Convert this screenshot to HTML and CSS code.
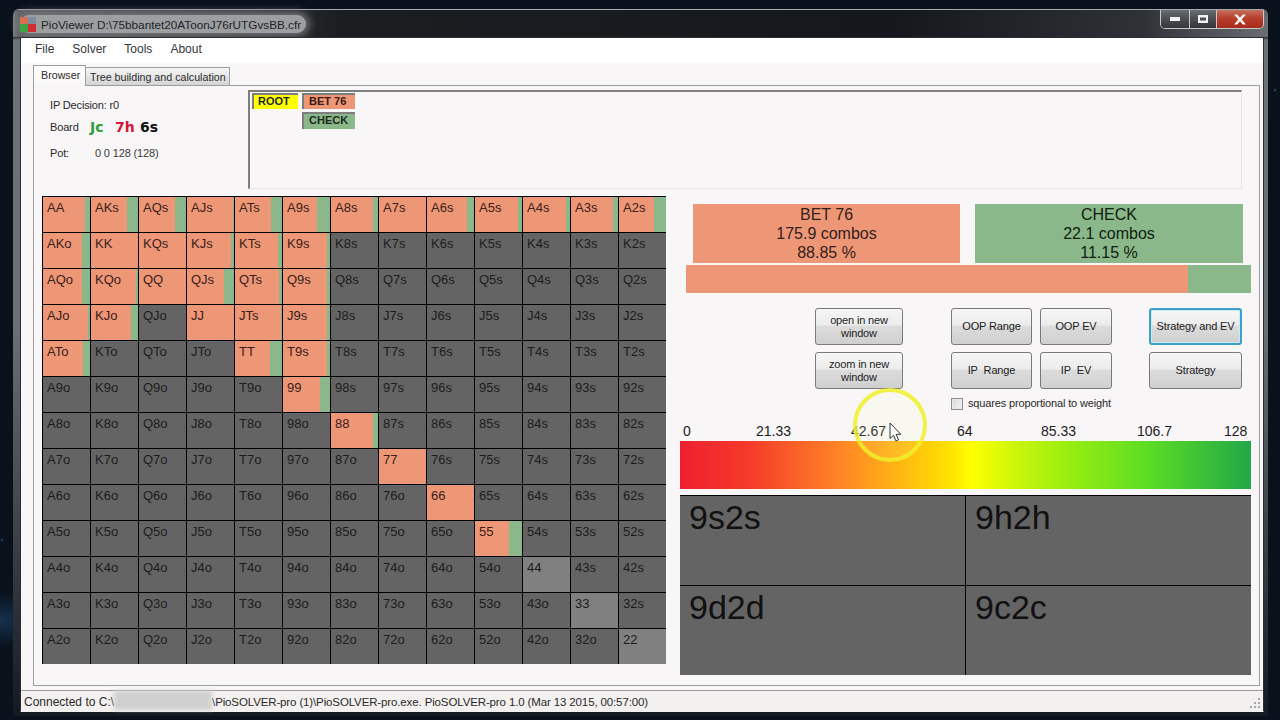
FILE: index.html
```html
<!DOCTYPE html>
<html lang="en">
<head>
<meta charset="utf-8">
<title>PioViewer</title>
<link rel="stylesheet" href="styles.css">
</head>
<body>
<div class="window">
  <div class="titlebar">
    <div class="title-glow">
      <div class="app-icon"><b class="q1"></b><b class="q2"></b><b class="q3"></b><b class="q4"></b></div>
      <span class="title-text">PioViewer D:\75bbantet20AToonJ76rUTGvsBB.cfr</span>
    </div>
    <div class="controls">
      <div class="ctl ctl-min"><svg width="12" height="6" viewBox="0 0 12 6"><rect x="1" y="1" width="10" height="4" fill="#eef2f4"/></svg></div>
      <div class="ctl ctl-max"><svg width="12" height="10" viewBox="0 0 12 10"><path d="M1 1h10v8H1z M3 3.5v3h6v-3z" fill="#eef2f4" fill-rule="evenodd"/></svg></div>
      <div class="ctl ctl-close"><svg width="14" height="11" viewBox="0 0 14 11"><path d="M1 0.5h3.2L7 3.4 9.8 0.5H13L8.8 5.5 13 10.5H9.8L7 7.6 4.2 10.5H1L5.2 5.5z" fill="#f4f0ee"/></svg></div>
    </div>
  </div>
  <div class="client">
    <nav class="menu"><span>File</span><span>Solver</span><span>Tools</span><span>About</span></nav>
    <div class="tabs">
      <div class="tab tab-active">Browser</div>
      <div class="tab tab-idle">Tree building and calculation</div>
    </div>
    <div class="page">
      <div class="top-row">
        <div class="info">
          <div class="info-decision">IP Decision: r0</div>
          <div class="info-board"><span class="info-label">Board</span><b class="card green">Jc</b><b class="card red">7h</b><b class="card black">6s</b></div>
          <div class="info-pot"><span class="info-label">Pot:</span><span>0 0 128 (128)</span></div>
        </div>
        <div class="tree">
          <div class="node node-root">ROOT</div>
          <div class="tree-col">
            <div class="node node-bet">BET 76</div>
            <div class="node node-check">CHECK</div>
          </div>
        </div>
      </div>
      <div class="main-row">
        <div class="grid">
          <div class="c p"><span>AA</span><i style="width:5px"></i></div><div class="c p"><span>AKs</span><i style="width:11px"></i></div><div class="c p"><span>AQs</span><i style="width:11px"></i></div><div class="c p"><span>AJs</span><i style="width:1px"></i></div><div class="c p"><span>ATs</span><i style="width:11px"></i></div><div class="c p"><span>A9s</span><i style="width:13px"></i></div><div class="c p"><span>A8s</span><i style="width:5px"></i></div><div class="c p"><span>A7s</span></div><div class="c p"><span>A6s</span><i style="width:7px"></i></div><div class="c p"><span>A5s</span><i style="width:4px"></i></div><div class="c p"><span>A4s</span><i style="width:4px"></i></div><div class="c p"><span>A3s</span><i style="width:5px"></i></div><div class="c p"><span>A2s</span><i style="width:12px"></i></div>
          <div class="c p"><span>AKo</span><i style="width:8px"></i></div><div class="c p"><span>KK</span></div><div class="c p"><span>KQs</span></div><div class="c p"><span>KJs</span><i style="width:3px"></i></div><div class="c p"><span>KTs</span><i style="width:4px"></i></div><div class="c p"><span>K9s</span><i style="width:3px"></i></div><div class="c"><span>K8s</span></div><div class="c"><span>K7s</span></div><div class="c"><span>K6s</span></div><div class="c"><span>K5s</span></div><div class="c"><span>K4s</span></div><div class="c"><span>K3s</span></div><div class="c"><span>K2s</span></div>
          <div class="c p"><span>AQo</span><i style="width:8px"></i></div><div class="c p"><span>KQo</span><i style="width:2px"></i></div><div class="c p"><span>QQ</span></div><div class="c p"><span>QJs</span><i style="width:10px"></i></div><div class="c p"><span>QTs</span><i style="width:3px"></i></div><div class="c p"><span>Q9s</span><i style="width:3px"></i></div><div class="c"><span>Q8s</span></div><div class="c"><span>Q7s</span></div><div class="c"><span>Q6s</span></div><div class="c"><span>Q5s</span></div><div class="c"><span>Q4s</span></div><div class="c"><span>Q3s</span></div><div class="c"><span>Q2s</span></div>
          <div class="c p"><span>AJo</span><i style="width:2px"></i></div><div class="c p"><span>KJo</span><i style="width:7px"></i></div><div class="c"><span>QJo</span></div><div class="c p"><span>JJ</span></div><div class="c p"><span>JTs</span><i style="width:1px"></i></div><div class="c p"><span>J9s</span><i style="width:3px"></i></div><div class="c"><span>J8s</span></div><div class="c"><span>J7s</span></div><div class="c"><span>J6s</span></div><div class="c"><span>J5s</span></div><div class="c"><span>J4s</span></div><div class="c"><span>J3s</span></div><div class="c"><span>J2s</span></div>
          <div class="c p"><span>ATo</span><i style="width:7px"></i></div><div class="c"><span>KTo</span></div><div class="c"><span>QTo</span></div><div class="c"><span>JTo</span></div><div class="c p"><span>TT</span><i style="width:12px"></i></div><div class="c p"><span>T9s</span><i style="width:3px"></i></div><div class="c"><span>T8s</span></div><div class="c"><span>T7s</span></div><div class="c"><span>T6s</span></div><div class="c"><span>T5s</span></div><div class="c"><span>T4s</span></div><div class="c"><span>T3s</span></div><div class="c"><span>T2s</span></div>
          <div class="c"><span>A9o</span></div><div class="c"><span>K9o</span></div><div class="c"><span>Q9o</span></div><div class="c"><span>J9o</span></div><div class="c"><span>T9o</span></div><div class="c p"><span>99</span><i style="width:10px"></i></div><div class="c"><span>98s</span></div><div class="c"><span>97s</span></div><div class="c"><span>96s</span></div><div class="c"><span>95s</span></div><div class="c"><span>94s</span></div><div class="c"><span>93s</span></div><div class="c"><span>92s</span></div>
          <div class="c"><span>A8o</span></div><div class="c"><span>K8o</span></div><div class="c"><span>Q8o</span></div><div class="c"><span>J8o</span></div><div class="c"><span>T8o</span></div><div class="c"><span>98o</span></div><div class="c p"><span>88</span><i style="width:5px"></i></div><div class="c"><span>87s</span></div><div class="c"><span>86s</span></div><div class="c"><span>85s</span></div><div class="c"><span>84s</span></div><div class="c"><span>83s</span></div><div class="c"><span>82s</span></div>
          <div class="c"><span>A7o</span></div><div class="c"><span>K7o</span></div><div class="c"><span>Q7o</span></div><div class="c"><span>J7o</span></div><div class="c"><span>T7o</span></div><div class="c"><span>97o</span></div><div class="c"><span>87o</span></div><div class="c p"><span>77</span></div><div class="c"><span>76s</span></div><div class="c"><span>75s</span></div><div class="c"><span>74s</span></div><div class="c"><span>73s</span></div><div class="c"><span>72s</span></div>
          <div class="c"><span>A6o</span></div><div class="c"><span>K6o</span></div><div class="c"><span>Q6o</span></div><div class="c"><span>J6o</span></div><div class="c"><span>T6o</span></div><div class="c"><span>96o</span></div><div class="c"><span>86o</span></div><div class="c"><span>76o</span></div><div class="c p"><span>66</span></div><div class="c"><span>65s</span></div><div class="c"><span>64s</span></div><div class="c"><span>63s</span></div><div class="c"><span>62s</span></div>
          <div class="c"><span>A5o</span></div><div class="c"><span>K5o</span></div><div class="c"><span>Q5o</span></div><div class="c"><span>J5o</span></div><div class="c"><span>T5o</span></div><div class="c"><span>95o</span></div><div class="c"><span>85o</span></div><div class="c"><span>75o</span></div><div class="c"><span>65o</span></div><div class="c p"><span>55</span><i style="width:13px"></i></div><div class="c"><span>54s</span></div><div class="c"><span>53s</span></div><div class="c"><span>52s</span></div>
          <div class="c"><span>A4o</span></div><div class="c"><span>K4o</span></div><div class="c"><span>Q4o</span></div><div class="c"><span>J4o</span></div><div class="c"><span>T4o</span></div><div class="c"><span>94o</span></div><div class="c"><span>84o</span></div><div class="c"><span>74o</span></div><div class="c"><span>64o</span></div><div class="c"><span>54o</span></div><div class="c l"><span>44</span></div><div class="c"><span>43s</span></div><div class="c"><span>42s</span></div>
          <div class="c"><span>A3o</span></div><div class="c"><span>K3o</span></div><div class="c"><span>Q3o</span></div><div class="c"><span>J3o</span></div><div class="c"><span>T3o</span></div><div class="c"><span>93o</span></div><div class="c"><span>83o</span></div><div class="c"><span>73o</span></div><div class="c"><span>63o</span></div><div class="c"><span>53o</span></div><div class="c"><span>43o</span></div><div class="c l"><span>33</span></div><div class="c"><span>32s</span></div>
          <div class="c"><span>A2o</span></div><div class="c"><span>K2o</span></div><div class="c"><span>Q2o</span></div><div class="c"><span>J2o</span></div><div class="c"><span>T2o</span></div><div class="c"><span>92o</span></div><div class="c"><span>82o</span></div><div class="c"><span>72o</span></div><div class="c"><span>62o</span></div><div class="c"><span>52o</span></div><div class="c"><span>42o</span></div><div class="c"><span>32o</span></div><div class="c l"><span>22</span></div>
        </div>
        <div class="side">
          <div class="actions">
            <div class="action action-bet">BET 76<br>175.9 combos<br>88.85 %</div>
            <div class="action action-check">CHECK<br>22.1 combos<br>11.15 %</div>
          </div>
          <div class="split"><div class="split-bet"></div><div class="split-check"></div></div>
          <div class="buttons">
            <button class="btn b1">open in new window</button>
            <button class="btn b2">OOP Range</button>
            <button class="btn b3">OOP EV</button>
            <button class="btn b4 btn-focus">Strategy and EV</button>
            <button class="btn b1">zoom in new window</button>
            <button class="btn b2">IP&nbsp; Range</button>
            <button class="btn b3">IP&nbsp; EV</button>
            <button class="btn b4">Strategy</button>
          </div>
          <label class="check"><span class="box"></span><span>squares proportional to weight</span></label>
          <div class="scale-labels"><span>0</span><span>21.33</span><span>42.67</span><span>64</span><span>85.33</span><span>106.7</span><span>128</span></div>
          <div class="scale"></div>
          <div class="hands">
            <div class="hand">9s2s</div>
            <div class="hand">9h2h</div>
            <div class="hand">9d2d</div>
            <div class="hand">9c2c</div>
          </div>
        </div>
      </div>
    </div>
    <div class="status">
      <span>Connected to C:\</span><span class="redacted"></span><span class="status-path">\PioSOLVER-pro (1)\PioSOLVER-pro.exe. PioSOLVER-pro 1.0 (Mar 13 2015, 00:57:00)</span>
      <svg class="grip" width="12" height="12" viewBox="0 0 12 12"><g fill="#a8a8a8"><rect x="9" y="1" width="2" height="2"/><rect x="5" y="5" width="2" height="2"/><rect x="9" y="5" width="2" height="2"/><rect x="1" y="9" width="2" height="2"/><rect x="5" y="9" width="2" height="2"/><rect x="9" y="9" width="2" height="2"/></g></svg>
    </div>
  </div>
</div>
<svg class="pointer" width="84" height="84" viewBox="0 0 84 84">
  <circle cx="41" cy="41" r="35" fill="rgba(255,255,190,0.10)" stroke="#f0f02a" stroke-opacity="0.85" stroke-width="4"/>
  <path d="M41 39v15.5l3.5-3.2 2.4 5.6 2.6-1.1-2.4-5.5h4.7z" fill="#fff" stroke="#30363c" stroke-width="1"/>
</svg>
</body>
</html>
```
FILE: styles.css
```css
* { box-sizing: border-box; }
html, body { margin: 0; height: 720px; overflow: hidden; }
body {
  font-family: "Liberation Sans", Arial, sans-serif;
  color: #222;
  background:
    radial-gradient(circle at 2px 540px, #2c4a70 0, transparent 2px),
    radial-gradient(circle at 1275px 90px, #30506e 0, transparent 2px),
    radial-gradient(ellipse at 0 620px, #17304c 0, transparent 60px),
    #08111c;
}
.window {
  position: absolute;
  left: 13px;
  top: 9px;
  width: 1255px;
  height: 707px;
  padding-bottom: 4px;
  border-radius: 6px 6px 0 0;
  border-top: 1px solid #a8acb0;
  background: linear-gradient(180deg, #181b1f 0, #14181c 26px, #6d7276 30px, #6a7074 45%, #262c33 88%, #141a22 100%);
  display: flex;
  flex-direction: column;
}
.titlebar {
  height: 27px;
  flex: none;
  display: flex;
  align-items: flex-start;
  border-radius: 6px 6px 0 0;
  background: linear-gradient(90deg, #7d8083 0, #5b5e60 6px, #1b1e21 330px, #14181c 70%, #2e3236 90%, #6a6e72 100%);
}
.title-glow {
  margin: 5px 0 0 7px;
  height: 18px;
  padding-right: 5px;
  display: flex;
  align-items: center;
  gap: 5px;
  border-radius: 9px;
  background: #9c9ea0;
  box-shadow: 0 0 8px 3px #77797b;
}
.app-icon {
  width: 16px;
  height: 15px;
  display: grid;
  grid-template-columns: 1fr 1fr;
  grid-template-rows: 1fr 1fr;
}
.q1 { background: #d96f52; }
.q2 { background: #7d8c9c; }
.q3 { background: #3fa245; }
.q4 { background: #d22f35; }
.title-text { font-size: 11.75px; color: #20242a; white-space: nowrap; }
.controls {
  margin-left: auto;
  margin-right: 4px;
  display: flex;
  height: 19px;
  border: 1px solid #c6cacc;
  border-top: 0;
  border-radius: 0 0 5px 5px;
  overflow: hidden;
}
.ctl { display: flex; align-items: center; justify-content: center; }
.ctl-min { width: 29px; background: linear-gradient(180deg, #6a6e70 0, #4a4e50 50%, #33373a 100%); border-right: 1px solid #c6cacc; }
.ctl-max { width: 27px; background: linear-gradient(180deg, #6a6e70 0, #4a4e50 50%, #33373a 100%); border-right: 1px solid #c6cacc; }
.ctl-close { width: 46px; background: linear-gradient(180deg, #c4705f 0, #b83a28 50%, #a82a1c 100%); }

.client {
  flex: 1;
  min-height: 0;
  margin: 0 4px 0 7px;
  border: 1px solid #2a2e32;
  border-bottom-color: #f0f0f0;
  border-radius: 2px 2px 0 0;
  background: linear-gradient(180deg, #fff 0, #fff 24px, #f8f6f6 26px);
  display: flex;
  flex-direction: column;
}
.menu {
  height: 25px;
  flex: none;
  padding: 3px 0 0 14px;
  display: flex;
  gap: 18px;
  font-size: 12px;
  line-height: 16px;
  color: #33363a;
}
.tabs {
  height: 23px;
  flex: none;
  margin: 0 0 -1px 12px;
  padding-top: 3px;
  display: flex;
  align-items: flex-end;
  position: relative;
  z-index: 1;
}
.tab { font-size: 10.7px; color: #2c2c2c; white-space: nowrap; }
.tab-active {
  width: 53px;
  height: 21px;
  padding: 3px 0 0 7px;
  border: 1px solid #9a9ea2;
  border-bottom: 0;
  background: linear-gradient(180deg, #fff 0, #f8f6f6 100%);
}
.tab-idle {
  width: 144px;
  height: 19px;
  padding: 3px 0 0 4px;
  border: 1px solid #9a9ea2;
  border-left: 0;
  background: linear-gradient(180deg, #f6f6f6 0, #e6e6e6 50%, #d4d4d4 100%);
}
.page {
  flex: 1;
  min-height: 0;
  margin: 0 3px 4px 12px;
  padding: 4px 0 0 8px;
  border: 1px solid #9a9ea2;
  display: flex;
  flex-direction: column;
  gap: 7px;
}
.top-row { display: flex; height: 99px; flex: none; }
.info { width: 206px; flex: none; padding: 8px 0 0 8px; font-size: 11px; line-height: 14px; letter-spacing: -0.15px; color: #2a2a2a; }
.info-decision { height: 19px; }
.info-board { height: 22px; display: flex; align-items: center; padding-bottom: 3px; }
.info-label { width: 40px; flex: none; }
.info-pot { margin-top: 7px; display: flex; }
.info-pot .info-label { width: 45px; }
.info-pot span:last-child { color: #3a3a3a; }
.card { font-family: "DejaVu Sans", sans-serif; font-size: 14px; letter-spacing: 0; width: 25px; flex: none; }
.green { color: #2f9e3f; }
.red { color: #d5143c; }
.black { color: #111; }
.tree {
  width: 994px;
  flex: none;
  padding: 1px 0 0 2px;
  border-top: 2px solid #7e7e7e;
  border-left: 2px solid #7e7e7e;
  border-right: 1px solid #e6e6e6;
  border-bottom: 1px solid #e6e6e6;
  display: flex;
  align-items: flex-start;
  gap: 4px;
}
.tree-col { display: flex; flex-direction: column; gap: 3px; }
.node {
  height: 16px;
  border-top: 2px solid #7e7e7e;
  border-left: 2px solid #7e7e7e;
  font-size: 11px;
  font-weight: bold;
  line-height: 13px;
  padding-left: 5px;
  color: #1e2a1e;
}
.node-root { width: 46px; padding-left: 4px; background: #ffff00; }
.node-bet { width: 53px; height: 16px; background: #ee9777; color: #3a1a10; }
.node-check { width: 53px; height: 17px; background: #8ab88a; }

.main-row { display: flex; gap: 14px; flex: 1; min-height: 0; }
.grid {
  width: 624px;
  height: 468px;
  flex: none;
  display: grid;
  grid-template-columns: repeat(13, 48px);
  grid-auto-rows: 36px;
}
.c {
  display: flex;
  background: #646464;
  border-left: 1px solid #000;
  border-top: 1px solid #000;
  font-size: 13px;
  line-height: 15px;
  color: #1c1c1c;
}
.c span { flex: 1; min-width: 0; padding: 3px 0 0 4px; }
.c i { flex: none; background: #8ab88a; }
.p { background: #ee9777; color: #3a2018; }
.l { background: #808080; }

.side { width: 571px; flex: none; padding-top: 8px; display: flex; flex-direction: column; }
.actions { margin-left: 13px; display: flex; gap: 15px; }
.action {
  height: 59px;
  padding-top: 1px;
  text-align: center;
  font-size: 16px;
  line-height: 19px;
  overflow: hidden;
  color: #20201c;
}
.action-bet { width: 267px; background: #ee9777; color: #33201a; }
.action-check { width: 268px; background: #8ab88a; color: #102010; }
.split { margin: 2px 0 0 6px; width: 565px; height: 28px; display: flex; flex: none; }
.split-bet { width: 502px; background: #ee9777; }
.split-check { flex: 1; background: #8ab88a; }
.buttons {
  margin: 15px 0 0 135px;
  display: grid;
  grid-template-columns: 88px 129px 80px 130px;
  grid-auto-rows: 37px;
  row-gap: 7px;
  justify-content: start;
}
.btn {
  justify-self: end;
  font-family: "Liberation Sans", Arial, sans-serif;
  font-size: 11px;
  line-height: 13px;
  letter-spacing: -0.15px;
  color: #222;
  padding: 0 8px;
  border: 1px solid #7a7a7a;
  border-radius: 3px;
  background: linear-gradient(180deg, #f6f6f6 0, #ececec 45%, #dcdcdc 50%, #cfcfcf 100%);
}
.b1 { width: 88px; }
.b2 { width: 81px; padding: 0 2px; }
.b3 { width: 72px; padding: 0 2px; }
.b4 { width: 93px; padding: 0 2px; }
.btn-focus { border: 2px solid #3f9fc9; box-shadow: inset 0 0 0 1px #c8eaf5; }
.check {
  margin: 8px 0 0 271px;
  display: flex;
  align-items: center;
  gap: 5px;
  font-size: 11px;
  line-height: 13px;
  letter-spacing: -0.15px;
  height: 13px;
  color: #2a2a2a;
}
.box {
  width: 12px;
  height: 12px;
  border: 1px solid #8e8f8f;
  background: linear-gradient(135deg, #d8d8d8 0, #f4f4f4 100%);
  box-shadow: inset 0 0 0 1px #e8e8e8;
}
.scale-labels {
  margin-top: 12px;
  padding: 0 0 1px 3px;
  display: grid;
  grid-template-columns: 73px 95px 106px 84px 96px 87px auto;
  font-size: 14px;
  line-height: 18px;
  color: #222;
}
.scale {
  height: 48px;
  flex: none;
  background: linear-gradient(90deg, #ee2030 0, #f53a2a 12%, #ff7f27 27%, #ffb414 38%, #ffe000 47%, #ffff00 51%, #c4f40c 60%, #98ee10 68%, #5cdc24 82%, #20a848 100%);
}
.hands {
  margin-top: 6px;
  height: 180px;
  flex: none;
  display: grid;
  grid-template-columns: 285px 286px;
  grid-template-rows: 90px 90px;
  background: #646464;
}
.hand {
  border-top: 1px solid #000;
  padding: 1px 0 0 9px;
  font-size: 34px;
  line-height: 40px;
  color: #111;
}
.hand:nth-child(even) { border-left: 1px solid #000; }
.status {
  height: 21px;
  flex: none;
  padding: 2px 0 0 3px;
  display: flex;
  align-items: center;
  border-top: 1px solid #9a9a9a;
  background: #f3f1ef;
  font-size: 12px;
  white-space: nowrap;
  color: #2a2a2a;
}
.status-path { font-size: 11.5px; letter-spacing: -0.13px; }
.redacted { width: 98px; height: 19px; flex: none; margin-top: -3px; background: #cfcfcf; filter: blur(2px); }
.grip { margin-left: auto; margin-right: 2px; align-self: flex-end; margin-bottom: 2px; }
.pointer { position: absolute; left: 849px; top: 384px; }
```
